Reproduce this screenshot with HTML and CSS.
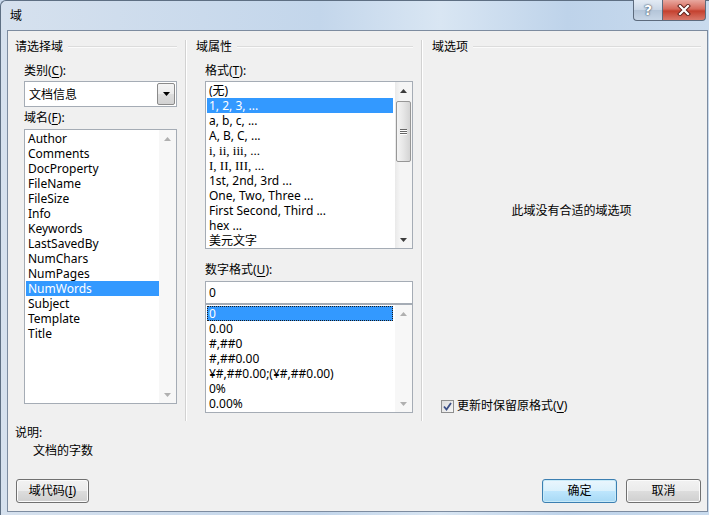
FILE: index.html
```html
<!DOCTYPE html>
<html lang="zh-CN">
<head>
    <meta charset="UTF-8">
    <title>域</title>
    <link rel="stylesheet" href="styles.css">
</head>
<body>
    <div class="window">
        <!-- Title bar -->
        <div class="titlebar">
            <span class="title">域</span>
            <div class="caption-btns">
                <span class="cap-btn help">?</span>
                <span class="cap-btn close">
                    <svg width="14" height="12" viewBox="0 0 14 12">
                        <path d="M3 2 L11 10 M11 2 L3 10" stroke="#5a1f1a" stroke-width="4" stroke-linecap="square"/>
                        <path d="M3 2 L11 10 M11 2 L3 10" stroke="#fff" stroke-width="2.2" stroke-linecap="square"/>
                    </svg>
                </span>
            </div>
        </div>

        <div class="client">
            <div class="columns">
                <!-- Choose a field -->
                <section class="col col-left">
                    <div class="group-head"><span>请选择域</span></div>
                    <div class="label first">类别(<u>C</u>):</div>
                    <div class="combo">
                        <span class="value">文档信息</span>
                        <span class="drop">
                            <svg width="7" height="4" viewBox="0 0 7 4"><path d="M0 0 H7 L3.5 4 Z" fill="#000"/></svg>
                        </span>
                    </div>
                    <div class="label">域名(<u>F</u>):</div>
                    <div class="listbox names">
                        <ul>
                            <li>Author</li>
                            <li>Comments</li>
                            <li>DocProperty</li>
                            <li>FileName</li>
                            <li>FileSize</li>
                            <li>Info</li>
                            <li>Keywords</li>
                            <li>LastSavedBy</li>
                            <li>NumChars</li>
                            <li>NumPages</li>
                            <li class="sel">NumWords</li>
                            <li>Subject</li>
                            <li>Template</li>
                            <li>Title</li>
                        </ul>
                        <div class="vscroll disabled">
                            <span class="arrow"><svg width="7" height="4" viewBox="0 0 7 4"><path d="M3.5 0 L7 4 H0 Z"/></svg></span>
                            <span class="fill"></span>
                            <span class="arrow"><svg width="7" height="4" viewBox="0 0 7 4"><path d="M0 0 H7 L3.5 4 Z"/></svg></span>
                        </div>
                    </div>
                </section>

                <!-- Field properties -->
                <section class="col col-mid">
                    <div class="group-head"><span>域属性</span></div>
                    <div class="label first">格式(<u>T</u>):</div>
                    <div class="listbox formats">
                        <ul>
                            <li>(无)</li>
                            <li class="sel">1, 2, 3, ...</li>
                            <li>a, b, c, ...</li>
                            <li>A, B, C, ...</li>
                            <li class="roman">i, ii, iii, ...</li>
                            <li class="roman">I, II, III, ...</li>
                            <li>1st, 2nd, 3rd ...</li>
                            <li>One, Two, Three ...</li>
                            <li>First Second, Third ...</li>
                            <li>hex ...</li>
                            <li>美元文字</li>
                        </ul>
                        <div class="vscroll">
                            <span class="arrow"><svg width="7" height="4" viewBox="0 0 7 4"><path d="M3.5 0 L7 4 H0 Z"/></svg></span>
                            <span class="thumb"><i></i><i></i><i></i></span>
                            <span class="fill"></span>
                            <span class="arrow"><svg width="7" height="4" viewBox="0 0 7 4"><path d="M0 0 H7 L3.5 4 Z"/></svg></span>
                        </div>
                    </div>
                    <div class="label numfmt">数字格式(<u>U</u>):</div>
                    <div class="textbox">0</div>
                    <div class="listbox numbers">
                        <ul>
                            <li class="sel focus">0</li>
                            <li>0.00</li>
                            <li>#,##0</li>
                            <li>#,##0.00</li>
                            <li>¥#,##0.00;(¥#,##0.00)</li>
                            <li>0%</li>
                            <li>0.00%</li>
                        </ul>
                        <div class="vscroll disabled">
                            <span class="arrow"><svg width="7" height="4" viewBox="0 0 7 4"><path d="M3.5 0 L7 4 H0 Z"/></svg></span>
                            <span class="fill"></span>
                            <span class="arrow"><svg width="7" height="4" viewBox="0 0 7 4"><path d="M0 0 H7 L3.5 4 Z"/></svg></span>
                        </div>
                    </div>
                </section>

                <!-- Field options -->
                <section class="col col-right">
                    <div class="group-head"><span>域选项</span></div>
                    <div class="message">此域没有合适的域选项</div>
                    <label class="check-row">
                        <span class="checkbox">
                            <svg width="9" height="9" viewBox="0 0 9 9"><path d="M1 4.5 L3.5 7.5 L8 1" fill="none" stroke="#3b4f86" stroke-width="1.8"/></svg>
                        </span>
                        <span>更新时保留原格式(<u>V</u>)</span>
                    </label>
                </section>
            </div>

            <div class="desc">说明:</div>
            <div class="desc-text">文档的字数</div>

            <div class="actions">
                <button class="btn">域代码(<u>I</u>)</button>
                <div class="right-btns">
                    <button class="btn default">确定</button>
                    <button class="btn">取消</button>
                </div>
            </div>
        </div>
    </div>
</body>
</html>
```
FILE: styles.css
```css
* {
    box-sizing: border-box;
}
body {
    margin: 0;
    width: 709px;
    height: 515px;
    overflow: hidden;
    font-family: "Noto Sans", "Noto Sans CJK SC", sans-serif;
    font-size: 12px;
    color: #000;
    background: #c9d9ec;
}
u {
    text-decoration: underline;
    text-underline-offset: 2px;
}

/* window frame */
.window {
    height: 515px;
    display: flex;
    flex-direction: column;
    border: 1px solid #5e6f83;
    border-right: none;
    border-bottom: none;
    border-radius: 6px 0 0 0;
    background: linear-gradient(to right, #d6e1ee, #c3d6eb 45%, #d9e6f3 62%, #bed3ea 80%, #c9dbee);
}
.titlebar {
    height: 29px;
    display: flex;
    align-items: flex-start;
}
.title {
    padding: 7px 0 0 9px;
    line-height: 16px;
    font-size: 12px;
}
.caption-btns {
    margin-left: auto;
    margin-right: 3px;
    margin-top: -1px;
    display: flex;
}
.cap-btn {
    height: 21px;
    display: flex;
    align-items: center;
    justify-content: center;
    border: 1px solid #5d6b7d;
    border-top: none;
}
.cap-btn.help {
    width: 29px;
    border-right: none;
    border-radius: 0 0 0 4px;
    background: linear-gradient(#e3ebf4, #c9d6e5 50%, #b3c4d8 50%, #c7d6e7);
    color: #fff;
    font-family: "DejaVu Sans", sans-serif;
    font-weight: bold;
    font-size: 14px;
    text-shadow: 0 0 2px #34455a, 0 0 1px #34455a;
}
.cap-btn.close {
    width: 44px;
    border-radius: 0 0 4px 0;
    background: linear-gradient(#e8a89f, #d6695b 45%, #c4412f 55%, #d9786a);
}

/* client area */
.client {
    flex: 1;
    margin: 0 1px 3px 6px;
    border: 1px solid #7d8ca0;
    background: #f0f0f0;
    display: flex;
    flex-direction: column;
}
.columns {
    display: flex;
    margin-top: 9px;
    height: 381px;
}
.col {
    display: flex;
    flex-direction: column;
}
.col-left {
    width: 178px;
    padding: 0 8px 0 7px;
    border-right: 1px solid #d2d2d2;
    box-shadow: 1px 0 0 #fff;
}
.col-mid {
    width: 236px;
    padding: 0 8px 0 10px;
    border-right: 1px solid #d2d2d2;
    box-shadow: 1px 0 0 #fff;
}
.col-right {
    flex: 1;
    padding: 0 6px 0 10px;
}
.group-head {
    display: flex;
    align-items: center;
    height: 14px;
    line-height: 14px;
}
.group-head::after {
    content: "";
    flex: 1;
    margin-left: 5px;
    border-top: 1px solid #dcdcdc;
    border-bottom: 1px solid #fbfbfb;
}
.label {
    margin: 4px 0 0 9px;
    line-height: 14px;
}
.label.first {
    margin-top: 10px;
}
.label.numfmt {
    margin-top: 14px;
}

/* combo box */
.combo {
    display: flex;
    align-items: center;
    height: 26px;
    margin: 3px 0 0 9px;
    padding: 1px;
    border: 1px solid #a5acb5;
    background: #fff;
}
.combo .value {
    flex: 1;
    padding-left: 3px;
}
.combo .drop {
    width: 18px;
    height: 22px;
    display: flex;
    align-items: center;
    justify-content: center;
    border: 1px solid #8a8a8a;
    border-radius: 2px;
    background: linear-gradient(#f4f4f4, #ebebeb 50%, #dddddd 50%, #d2d2d2);
}

/* list boxes */
.listbox {
    display: flex;
    margin: 4px 0 0 9px;
    border: 1px solid #a5acb5;
    background: #fff;
    overflow: hidden;
}
.listbox.names {
    height: 275px;
}
.listbox.formats {
    height: 168px;
    margin-top: 3px;
}
.listbox.numbers {
    height: 109px;
    margin-top: 0;
}
.listbox ul {
    flex: 1;
    list-style: none;
    margin: 0;
    padding: 1px 2px 0 1px;
}
.listbox.names ul {
    padding-right: 0;
}
.listbox li {
    height: 15px;
    line-height: 15px;
    padding-left: 2px;
    white-space: nowrap;
}
.listbox li.sel {
    background: #3399ff;
    color: #fff;
}
.listbox li.focus {
    outline: 1px dotted #1a1a1a;
    outline-offset: -1px;
}
.listbox li.roman {
    font-family: "Liberation Serif", serif;
    font-size: 13px;
}

/* scroll bars */
.vscroll {
    width: 17px;
    display: flex;
    flex-direction: column;
    background: linear-gradient(to right, #e9e9e9, #f5f5f5 30%, #f5f5f5);
}
.vscroll.disabled {
    background: #f7f7f7;
}
.vscroll .arrow {
    height: 17px;
    display: flex;
    align-items: center;
    justify-content: center;
    fill: #3c3c3c;
}
.vscroll.disabled .arrow {
    fill: #b0b0b0;
}
.vscroll .fill {
    flex: 1;
}
.vscroll .thumb {
    height: 61px;
    margin: 2px 1px 0;
    display: flex;
    flex-direction: column;
    align-items: center;
    justify-content: center;
    gap: 1px;
    border: 1px solid #979797;
    border-radius: 2px;
    background: linear-gradient(to right, #f4f4f4, #e6e6e6 50%, #d4d4d4);
}
.vscroll .thumb i {
    width: 7px;
    height: 1px;
    background: #666;
    box-shadow: 0 1px 0 #fff;
}

/* text box */
.textbox {
    height: 23px;
    margin: 4px 0 0 9px;
    padding-left: 3px;
    line-height: 21px;
    border: 1px solid #a5acb5;
    background: #fff;
}

/* right column */
.message {
    margin-top: 150px;
    padding-left: 10px;
    line-height: 14px;
    text-align: center;
}
.check-row {
    margin: auto 0 8px 9px;
    display: flex;
    align-items: center;
    gap: 3px;
    line-height: 14px;
}
.checkbox {
    width: 13px;
    height: 13px;
    display: flex;
    align-items: center;
    justify-content: center;
    border: 1px solid #8e8f8f;
    background: linear-gradient(135deg, #dcdcdc, #f6f6f6);
}

/* footer */
.desc {
    margin: 5px 0 0 7px;
    line-height: 14px;
}
.desc-text {
    margin: 4px 0 0 25px;
    line-height: 14px;
}
.actions {
    display: flex;
    margin-top: 21px;
    padding: 0 6px 0 8px;
}
.right-btns {
    margin-left: auto;
    display: flex;
    gap: 9px;
}
.btn {
    width: 73px;
    height: 24px;
    padding: 0;
    font: inherit;
    color: #000;
    line-height: 22px;
    text-align: center;
    border: 1px solid #707070;
    border-radius: 3px;
    background: linear-gradient(#f2f2f2, #ebebeb 50%, #dddddd 50%, #cfcfcf);
    box-shadow: inset 0 0 0 1px #fbfbfb;
}
.right-btns .btn {
    width: 75px;
}
.btn.default {
    border-color: #3c7fb1;
    background: linear-gradient(#eaf6fd, #d9f0fc 50%, #bee6fd 50%, #a7d9f5);
    box-shadow: inset 0 0 0 1px #c8eaf8;
}
```
